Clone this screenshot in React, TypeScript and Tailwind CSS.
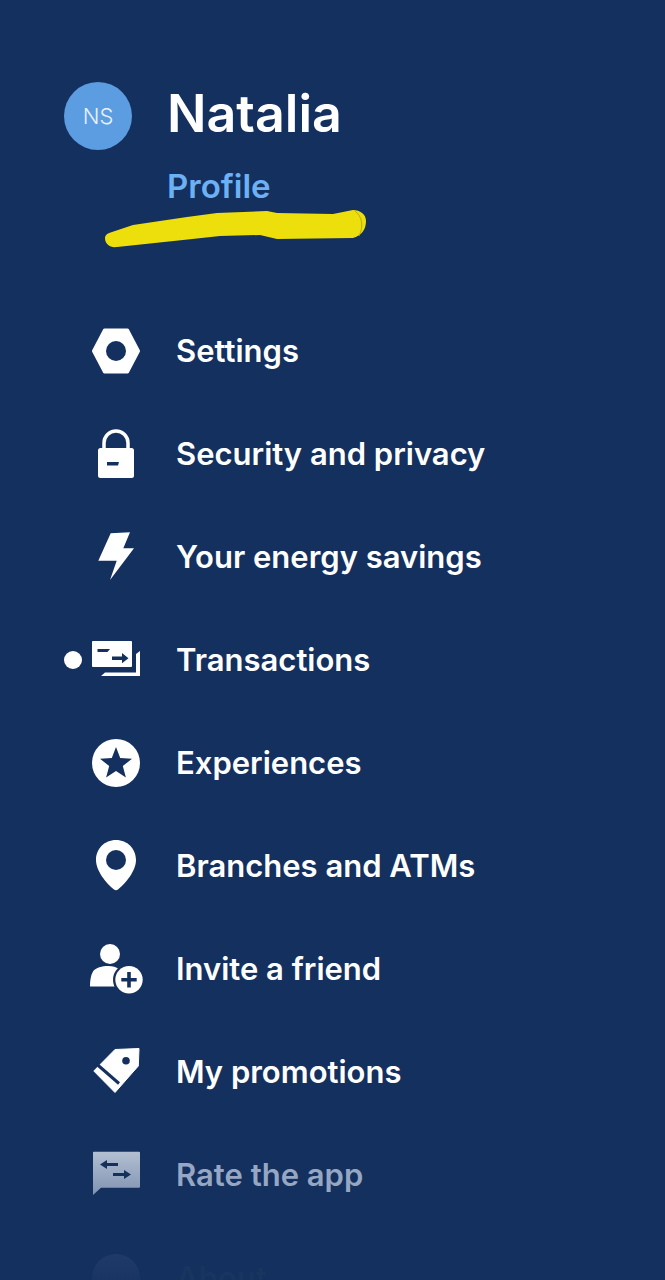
import type { ReactNode } from "react";

const NAVY = "#14305f";

function Icon({ children }: { children: ReactNode }) {
  return (
    <svg viewBox="0 0 48 48" className="h-12 w-12 shrink-0 overflow-visible" fill="#fff">
      {children}
    </svg>
  );
}

const SettingsIcon = () => (
  <Icon>
    <path
      d="M1.5 24 12.5 3h23l11 21-11 21h-23z"
      stroke="#fff"
      strokeWidth="3"
      strokeLinejoin="round"
    />
    <circle cx="24" cy="24" r="10" fill={NAVY} />
  </Icon>
);

const LockIcon = () => (
  <Icon>
    <path d="M12 20v-7a12 12 0 0 1 24 0v7" fill="none" stroke="#fff" strokeWidth="3.5" />
    <rect x="6" y="18" width="36" height="30" rx="2.5" />
    <path d="M15 32h12l-1 3.500H15z" fill={NAVY} />
  </Icon>
);

const BoltIcon = () => (
  <Icon>
    <path d="M18.7.3 38-.7 31.3 15.3H42L18 47l6.7-19.3H6.3z" />
  </Icon>
);

const TransactionsIcon = () => (
  <Icon>
    <rect x="0" y="5" width="40" height="26" rx="1" />
    <path d="M5.500 13H18l-2.500 3H5.500z" fill={NAVY} />
    <path d="M20 20.500h10V17l6.500 5.300-6.500 5V24H20z" fill={NAVY} />
    <path d="M9 40l4-3.500h31V18l4-3v25z" />
  </Icon>
);

const StarIcon = () => (
  <Icon>
    <circle cx="24" cy="24" r="24" />
    <path
      d="m24 8 4.200 11.100 11.800.6-9.200 7.400 3.100 11.500L24 31.900l-9.900 6.700 3.100-11.500-9.200-7.400 11.800-.6z"
      fill={NAVY}
    />
  </Icon>
);

const PinIcon = () => (
  <Icon>
    <path d="M24-2C12.500-2 4 6.800 4 18c0 11 10.500 23.500 18 29.500 1.200 1 2.800 1 4 0C33.500 41.500 44 29 44 18 44 6.800 35.500-2 24-2z" />
    <circle cx="24" cy="18" r="10" fill={NAVY} />
  </Icon>
);

const InviteIcon = () => (
  <Icon>
    <circle cx="18" cy="9" r="10" />
    <path d="M-2 41.500c0-5 .5-11 3-15 3-4 9-5.500 15-5.500 5 0 8 1 11 3-4 4-6 10-4 17.500z" />
    <circle cx="37" cy="34.700" r="16" fill={NAVY} />
    <circle cx="37" cy="34.700" r="13.700" />
    <path d="M35.200 27h3.600v5.900h5.900v3.600h-5.900v5.900h-3.600v-5.900h-5.900v-3.600h5.900z" fill={NAVY} />
  </Icon>
);

const TagIcon = () => (
  <Icon>
    <path d="M47 .5 46.300 18 23 44.500 1.800 23 23 1.500z" stroke="#fff" strokeWidth="1" strokeLinejoin="round" />
    <path d="M4 15.500 27 35.500" stroke={NAVY} strokeWidth="3" />
    <circle cx="34" cy="12.700" r="3.800" fill={NAVY} />
  </Icon>
);

const RateIcon = () => (
  <Icon>
    <defs>
      <linearGradient id="rate-fade" x1="0" y1="0" x2="0" y2="1">
        <stop offset="0" stopColor="#b3bfd2" />
        <stop offset="1" stopColor="#8093b2" />
      </linearGradient>
    </defs>
    <path d="M1 1.500A1 1 0 0 1 2 .7h45a1 1 0 0 1 1 1v34a1 1 0 0 1-1 1H9L1 44z" fill="url(#rate-fade)" />
    <path d="M8 13.500 15 9v3h11v3H15v3z" fill={NAVY} />
    <path d="M39 23.500 32 19v3H21v3h11v3z" fill={NAVY} />
  </Icon>
);

const AboutIcon = () => (
  <Icon>
    <defs>
      <linearGradient id="about-fade" x1="0" y1="0" x2="0" y2="1">
        <stop offset="0" stopColor="#1f3a68" />
        <stop offset="1" stopColor="#14305f" />
      </linearGradient>
    </defs>
    <circle cx="24" cy="24" r="24" fill="url(#about-fade)" />
  </Icon>
);

const menu = [
  { label: "Settings", icon: <SettingsIcon /> },
  { label: "Security and privacy", icon: <LockIcon /> },
  { label: "Your energy savings", icon: <BoltIcon /> },
  { label: "Transactions", icon: <TransactionsIcon />, dot: true },
  { label: "Experiences", icon: <StarIcon /> },
  { label: "Branches and ATMs", icon: <PinIcon /> },
  { label: "Invite a friend", icon: <InviteIcon /> },
  { label: "My promotions", icon: <TagIcon /> },
  { label: "Rate the app", icon: <RateIcon />, muted: true },
  { label: "About", icon: <AboutIcon />, hidden: true },
];

export default function App() {
  return (
    <div className="relative h-[1280px] w-[665px] overflow-hidden bg-[#14305f] font-['Inter',sans-serif] text-white">
      {/* Header */}
      <div className="flex h-[299px] items-start pl-[64px] pt-[82px]">
        <div className="flex h-[68px] w-[68px] shrink-0 items-center justify-center rounded-full bg-[#5c9ce0] text-[22px] font-light text-[#e6f1fc]">
          NS
        </div>
        <div className="ml-[35px] flex flex-col">
          <span className="text-[52px] font-semibold leading-[64px]">Natalia</span>
          <span className="mt-[20px] text-[33px] font-semibold leading-[40px] text-[#6db1f5]">Profile</span>
        </div>
      </div>

      {/* Marker stroke drawn over the screenshot */}
      <svg viewBox="0 0 665 300" className="absolute left-0 top-0 h-[300px] w-[665px]">
        <path
          d="M105 238C105 235 108 233 112 232L133 225 187 217 217 213 267 211 277 213 333 214 353 210C360 210 366 214 366 221 366 228 363 235 353 238L277 239 260 235 220 236 183 240 117 247C110 248 105 244 105 238Z"
          fill="#ecdf0c"
        />
        <path d="M355 211C362 216 364 226 359 236" fill="none" stroke="#b3ab1c" strokeWidth="1" />
      </svg>

      {/* Menu */}
      <ul className="flex flex-col pl-[92px]">
        {menu.map((item) => (
          <li key={item.label} className="relative flex h-[103px] items-center gap-[36px]">
            {item.dot && <span className="absolute left-[-28px] h-[18px] w-[18px] rounded-full bg-white" />}
            {item.icon}
            <span
              className={`pt-[1px] text-[31px] font-semibold ${
                item.muted ? "text-[#96a7c3]" : item.hidden ? "text-[#18345f]" : "text-white"
              }`}
            >
              {item.label}
            </span>
          </li>
        ))}
      </ul>
    </div>
  );
}
